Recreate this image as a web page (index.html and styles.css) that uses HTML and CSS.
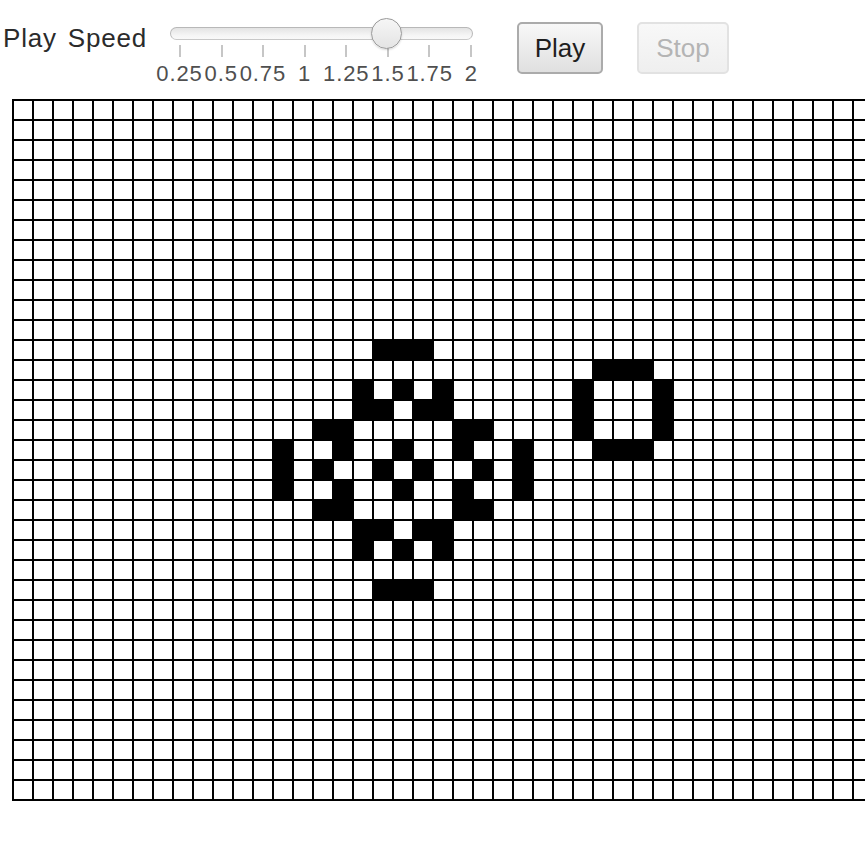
FILE: index.html
```html
<!DOCTYPE html>
<html lang="en">
<head>
<meta charset="utf-8">
<title>Game of Life</title>
<link rel="stylesheet" href="styles.css">
</head>
<body>
<div class="app">
  <div class="toolbar">
    <label class="speed-label">Play Speed</label>
    <div class="slider">
      <div class="track"><div class="thumb"></div></div>
      <div class="ticks">
        <span class="tick"></span><span class="tick"></span><span class="tick"></span><span class="tick"></span>
        <span class="tick"></span><span class="tick"></span><span class="tick"></span><span class="tick"></span>
      </div>
      <div class="tick-labels">
        <span class="tick-label">0.25</span>
        <span class="tick-label">0.5</span>
        <span class="tick-label">0.75</span>
        <span class="tick-label">1</span>
        <span class="tick-label">1.25</span>
        <span class="tick-label">1.5</span>
        <span class="tick-label">1.75</span>
        <span class="tick-label">2</span>
      </div>
    </div>
    <button class="btn btn-play">Play</button>
    <button class="btn btn-stop" disabled>Stop</button>
  </div>
  <div class="board" id="board"></div>
</div>
<script src="script.js"></script>
</body>
</html>
```

FILE: styles.css
```css
html, body {
  margin: 0;
  padding: 0;
  background: #ffffff;
  overflow: hidden;
}

body {
  font-family: "Liberation Sans", Arial, sans-serif;
  color: #2a2a2a;
}

.toolbar {
  display: flex;
  align-items: flex-start;
  height: 99px;
  padding-left: 3px;
  box-sizing: border-box;
}

.speed-label {
  flex: 0 0 167px;
  margin-top: 23px;
  font-size: 26px;
  line-height: 30px;
  color: #2b2b2b;
  word-spacing: 3px;
  letter-spacing: 0.8px;
}

.slider {
  flex: 0 0 303px;
  width: 303px;
}

.track {
  position: relative;
  margin-top: 27px;
  height: 13px;
  box-sizing: border-box;
  border: 1px solid #b8b8b8;
  border-bottom-color: #c8c8c8;
  border-radius: 7px;
  background: linear-gradient(#e3e3e3, #f6f6f6 70%, #f9f9f9);
}

.thumb {
  position: absolute;
  left: 200px;
  top: -10px;
  width: 31px;
  height: 31px;
  box-sizing: border-box;
  border-radius: 50%;
  border: 1.5px solid #9a9a9a;
  background: linear-gradient(#f6f6f6, #e4e4e4);
  box-shadow: 0 1px 2px rgba(0, 0, 0, 0.15);
}

.ticks {
  display: flex;
  justify-content: space-between;
  margin-top: 5px;
  padding: 0 1px 0 9px;
  height: 12px;
}

.tick {
  width: 2px;
  height: 12px;
  background: #c6c6c6;
}

.tick-labels {
  display: flex;
  margin-top: 5px;
  margin-left: -11.4px;
  width: 333.7px;
}

.tick-label {
  flex: 0 0 41.71px;
  min-width: 0;
  display: flex;
  justify-content: center;
  white-space: nowrap;
  font-size: 22px;
  line-height: 24px;
  letter-spacing: 0.9px;
  color: #4f4f4f;
}

.btn {
  margin-top: 22px;
  height: 52px;
  box-sizing: border-box;
  padding: 0;
  font-family: inherit;
  font-size: 26px;
  border-radius: 5px;
}

.btn-play {
  margin-left: 44px;
  width: 86px;
  color: #1e1e1e;
  border: 2px solid #ababab;
  background: linear-gradient(#f8f8f8, #e0e0e0);
}

.btn-stop {
  margin-left: 34px;
  width: 92px;
  color: #b4b4b4;
  border: 2px solid #e2e2e2;
  background: linear-gradient(#f8f8f8, #efefef);
}

.board {
  display: grid;
  grid-template-columns: repeat(50, 18px);
  grid-auto-rows: 18px;
  gap: 2px;
  padding: 2px;
  margin-left: 12px;
  width: max-content;
  background: #000000;
}

.cell {
  background: #ffffff;
}

.cell.alive {
  background: #000000;
}
```

FILE: script.js
```js
(function () {
  var COLS = 50;
  var ROWS = 35;
  var live = {
    12: [18, 19, 20],
    13: [29, 30, 31],
    14: [17, 19, 21, 28, 32],
    15: [17, 18, 20, 21, 28, 32],
    16: [15, 16, 22, 23, 28, 32],
    17: [13, 16, 19, 22, 25, 29, 30, 31],
    18: [13, 15, 18, 20, 23, 25],
    19: [13, 16, 19, 22, 25],
    20: [15, 16, 22, 23],
    21: [17, 18, 20, 21],
    22: [17, 19, 21],
    24: [18, 19, 20]
  };
  var board = document.getElementById('board');
  var frag = document.createDocumentFragment();
  for (var r = 0; r < ROWS; r++) {
    var row = live[r] || [];
    for (var c = 0; c < COLS; c++) {
      var cell = document.createElement('div');
      cell.className = row.indexOf(c) >= 0 ? 'cell alive' : 'cell';
      frag.appendChild(cell);
    }
  }
  board.appendChild(frag);
})();
```
